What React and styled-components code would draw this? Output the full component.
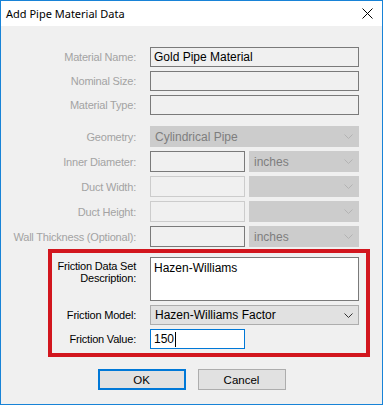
import React from 'react';
import styled, { createGlobalStyle } from 'styled-components';

const GlobalStyle = createGlobalStyle`
    html, body {
        margin: 0;
        padding: 0;
        background: #ffffff;
    }
    body {
        font-family: "Liberation Sans", Arial, sans-serif;
    }
`;

const Window = styled.div`
    width: 383px;
    height: 405px;
    box-sizing: border-box;
    border: 1px solid #1883d7;
    background: #f0f0f0;
    display: flex;
    flex-direction: column;
`;

const TitleBar = styled.div`
    height: 25px;
    background: #ffffff;
    display: flex;
    align-items: center;
    justify-content: space-between;
    padding: 0 9px 0 5px;
    font-family: "Noto Sans", "Open Sans", sans-serif;
    font-size: 11px;
    color: #000;
`;

const Body = styled.div`
    display: flex;
    flex-direction: column;
    padding-top: 21px;
    font-size: 11px;
    letter-spacing: -0.2px;
`;

const Section = styled.div`
    display: flex;
    flex-direction: column;
    gap: 4px;
    padding-right: 23px;
    margin-top: ${(p) => p.$top || 0}px;
`;

const Row = styled.div`
    display: grid;
    grid-template-columns: ${(p) => p.$label || 135}px 1fr;
    column-gap: 14px;
    height: ${(p) => p.$h || 21}px;
    align-items: ${(p) => (p.$top ? 'start' : 'center')};
`;

const Label = styled.div`
    text-align: right;
    color: ${(p) => (p.$active ? '#000000' : '#a3a3a3')};
    line-height: 12px;
    padding-top: ${(p) => p.$pt || 0}px;
    white-space: nowrap;
`;

const Split = styled.div`
    display: flex;
    gap: 4px;
    height: 100%;
`;

const TextBox = styled.div`
    box-sizing: border-box;
    height: 100%;
    width: ${(p) => (p.$w ? `${p.$w}px` : '100%')};
    flex-shrink: 0;
    border: 1px solid ${(p) => (p.$focus ? '#0078d7' : p.$disabled ? '#cccccc' : '#7a7a7a')};
    background: ${(p) => (p.$white ? '#ffffff' : '#f0f0f0')};
    color: #000;
    font-size: 12px;
    letter-spacing: 0;
    padding: ${(p) => (p.$multi ? '3px 3px' : '0 3px')};
    display: flex;
    align-items: ${(p) => (p.$multi ? 'flex-start' : 'center')};
`;

const Caret = styled.span`
    display: inline-block;
    width: 1px;
    height: 15px;
    background: #000;
    margin-left: 1px;
`;

const Select = styled.div`
    box-sizing: border-box;
    height: 100%;
    flex: 1;
    border: 1px solid ${(p) => (p.$disabled ? '#cccccc' : '#adadad')};
    background: ${(p) => (p.$disabled ? '#cccccc' : '#e1e1e1')};
    color: ${(p) => (p.$disabled ? '#7e7e7e' : '#000000')};
    font-size: 12px;
    letter-spacing: 0;
    display: flex;
    align-items: center;
    justify-content: space-between;
    padding: 0 5px 0 4px;
`;

const Group = styled.div`
    margin: 2px 12px 0 47px;
    border: 4px solid #d2161e;
    padding: 4px 7px 4px 0;
    display: flex;
    flex-direction: column;
    gap: 4px;
`;

const ButtonBar = styled.div`
    display: flex;
    justify-content: center;
    gap: 12px;
    margin-top: 12px;
`;

const Button = styled.div`
    box-sizing: border-box;
    width: 88px;
    height: 21px;
    background: #e1e1e1;
    border: ${(p) => (p.$default ? '2px solid #0078d7' : '1px solid #adadad')};
    display: flex;
    align-items: center;
    justify-content: center;
    color: #000;
    font-size: 11.5px;
    letter-spacing: 0;
`;

const Chevron = ({ color }) => (
    <svg width="9" height="5" viewBox="0 0 9 5">
        <polyline points="0.5,0.5 4.5,4.5 8.5,0.5" fill="none" stroke={color} strokeWidth="1" />
    </svg>
);

const CloseIcon = () => (
    <svg width="11" height="11" viewBox="0 0 11 11">
        <path d="M0.5 0.5 L10.5 10.5 M10.5 0.5 L0.5 10.5" stroke="#000" strokeWidth="1" fill="none" />
    </svg>
);

const DropDown = ({ children, disabled }) => (
    <Select $disabled={disabled}>
        <span>{children}</span>
        <Chevron color={disabled ? '#b3b3b3' : '#333333'} />
    </Select>
);

const App = () => (
    <>
        <GlobalStyle />
        <Window>
            <TitleBar>
                <span>Add Pipe Material Data</span>
                <CloseIcon />
            </TitleBar>
            <Body>
                <Section>
                    <Row $h={20}>
                        <Label>Material Name:</Label>
                        <TextBox>Gold Pipe Material</TextBox>
                    </Row>
                    <Row $h={20}>
                        <Label>Nominal Size:</Label>
                        <TextBox />
                    </Row>
                    <Row $h={20}>
                        <Label>Material Type:</Label>
                        <TextBox />
                    </Row>
                </Section>
                <Section $top={11}>
                    <Row>
                        <Label>Geometry:</Label>
                        <Split>
                            <DropDown disabled>Cylindrical Pipe</DropDown>
                        </Split>
                    </Row>
                    <Row>
                        <Label>Inner Diameter:</Label>
                        <Split>
                            <TextBox $w={95} />
                            <DropDown disabled>inches</DropDown>
                        </Split>
                    </Row>
                    <Row>
                        <Label>Duct Width:</Label>
                        <Split>
                            <TextBox $w={95} $disabled />
                            <DropDown disabled />
                        </Split>
                    </Row>
                    <Row>
                        <Label>Duct Height:</Label>
                        <Split>
                            <TextBox $w={95} $disabled />
                            <DropDown disabled />
                        </Split>
                    </Row>
                    <Row>
                        <Label>Wall Thickness (Optional):</Label>
                        <Split>
                            <TextBox $w={95} />
                            <DropDown disabled>inches</DropDown>
                        </Split>
                    </Row>
                </Section>
                <Group>
                    <Row $label={84} $h={44} $top>
                        <Label $active $pt={3}>
                            Friction Data Set
                            <br />
                            Description:
                        </Label>
                        <TextBox $white $multi>Hazen-Williams</TextBox>
                    </Row>
                    <Row $label={84} $h={20}>
                        <Label $active>Friction Model:</Label>
                        <Split>
                            <DropDown>Hazen-Williams Factor</DropDown>
                        </Split>
                    </Row>
                    <Row $label={84} $h={20}>
                        <Label $active>Friction Value:</Label>
                        <Split>
                            <TextBox $w={95} $white $focus>
                                150
                                <Caret />
                            </TextBox>
                        </Split>
                    </Row>
                </Group>
                <ButtonBar>
                    <Button $default>OK</Button>
                    <Button>Cancel</Button>
                </ButtonBar>
            </Body>
        </Window>
    </>
);

export default App;
